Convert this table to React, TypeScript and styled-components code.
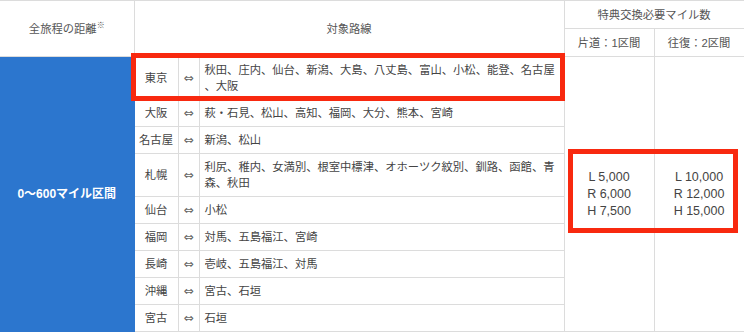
import React from 'react';
import styled, { createGlobalStyle } from 'styled-components';

interface Route {
  city: string;
  targets: string;
}

const routes: Route[] = [
  { city: '東京', targets: '秋田、庄内、仙台、新潟、大島、八丈島、富山、小松、能登、名古屋、大阪' },
  { city: '大阪', targets: '萩・石見、松山、高知、福岡、大分、熊本、宮崎' },
  { city: '名古屋', targets: '新潟、松山' },
  { city: '札幌', targets: '利尻、稚内、女満別、根室中標津、オホーツク紋別、釧路、函館、青森、秋田' },
  { city: '仙台', targets: '小松' },
  { city: '福岡', targets: '対馬、五島福江、宮崎' },
  { city: '長崎', targets: '壱岐、五島福江、対馬' },
  { city: '沖縄', targets: '宮古、石垣' },
  { city: '宮古', targets: '石垣' },
];

const oneWay = ['L 5,000', 'R 6,000', 'H 7,500'];
const roundTrip = ['L 10,000', 'R 12,000', 'H 15,000'];

const GlobalStyle = createGlobalStyle`
  body {
    margin: 0;
    background: #fff;
    font-family: 'Liberation Sans', 'Noto Sans CJK JP', sans-serif;
  }
`;

const Wrap = styled.div`
  position: relative;
  width: 744px;
  height: 332px;
  overflow: hidden;
`;

const Table = styled.table`
  width: 744px;
  border-collapse: collapse;
  table-layout: fixed;
  font-size: 11.3px;
  color: #444;

  th,
  td {
    border: 1px solid #dcdcdc;
    padding: 5px;
    line-height: 16px;
  }

  tr > :first-child {
    border-left: none;
  }
`;

const Head = styled.th<{ $h?: number }>`
  height: ${({ $h }) => ($h ? `${$h}px` : 'auto')};
  padding: 0 !important;
  font-weight: normal;
  color: #555;
  text-align: center;
  vertical-align: middle;

  sup {
    font-size: 8px;
    vertical-align: top;
    position: relative;
    top: -3px;
  }
`;

const Zone = styled.td`
  background: #2c76ce;
  border-color: #2c76ce !important;
  color: #fff;
  font-weight: bold;
  font-size: 12px;
  text-align: center;
  vertical-align: middle;
`;

const City = styled.td`
  text-align: center;
  vertical-align: middle;
  padding: 5px 0 !important;
`;

const Arrow = styled.td`
  text-align: center;
  vertical-align: middle;
  padding: 5px 0 !important;
  color: #666;
  font-family: 'DejaVu Sans', sans-serif;
  font-size: 12px;
`;

const Targets = styled.td`
  line-break: anywhere;
  vertical-align: middle;
`;

const Miles = styled.td`
  text-align: center;
  vertical-align: middle;
  font-size: 12.5px;
  line-height: 17px !important;
  color: #444;
`;

const Mark = styled.div<{ $x: number; $y: number; $w: number; $h: number }>`
  position: absolute;
  left: ${({ $x }) => $x}px;
  top: ${({ $y }) => $y}px;
  width: ${({ $w }) => $w}px;
  height: ${({ $h }) => $h}px;
  border: 5px solid #f8290f;
  box-sizing: border-box;
  pointer-events: none;
`;

const App = () => {
  return (
    <>
      <GlobalStyle />
      <Wrap>
        <Table>
          <colgroup>
            <col style={{ width: 134 }} />
            <col style={{ width: 44 }} />
            <col style={{ width: 21 }} />
            <col style={{ width: 365 }} />
            <col style={{ width: 90 }} />
            <col style={{ width: 90 }} />
          </colgroup>
          <thead>
            <tr>
              <Head rowSpan={2}>
                全旅程の距離<sup>※</sup>
              </Head>
              <Head rowSpan={2} colSpan={3}>
                対象路線
              </Head>
              <Head colSpan={2} $h={27}>
                特典交換必要マイル数
              </Head>
            </tr>
            <tr>
              <Head $h={27}>片道：1区間</Head>
              <Head $h={27}>往復：2区間</Head>
            </tr>
          </thead>
          <tbody>
            {routes.map((r, i) => (
              <tr key={r.city}>
                {i === 0 && <Zone rowSpan={routes.length}>0〜600マイル区間</Zone>}
                <City>{r.city}</City>
                <Arrow>⇔</Arrow>
                <Targets>{r.targets}</Targets>
                {i === 0 && (
                  <>
                    <Miles rowSpan={routes.length}>
                      {oneWay.map((m) => (
                        <div key={m}>{m}</div>
                      ))}
                    </Miles>
                    <Miles rowSpan={routes.length}>
                      {roundTrip.map((m) => (
                        <div key={m}>{m}</div>
                      ))}
                    </Miles>
                  </>
                )}
              </tr>
            ))}
          </tbody>
        </Table>
        <Mark $x={131} $y={53} $w={434} $h={48} />
        <Mark $x={568} $y={149} $w={170} $h={84} />
      </Wrap>
    </>
  );
};

export default App;
